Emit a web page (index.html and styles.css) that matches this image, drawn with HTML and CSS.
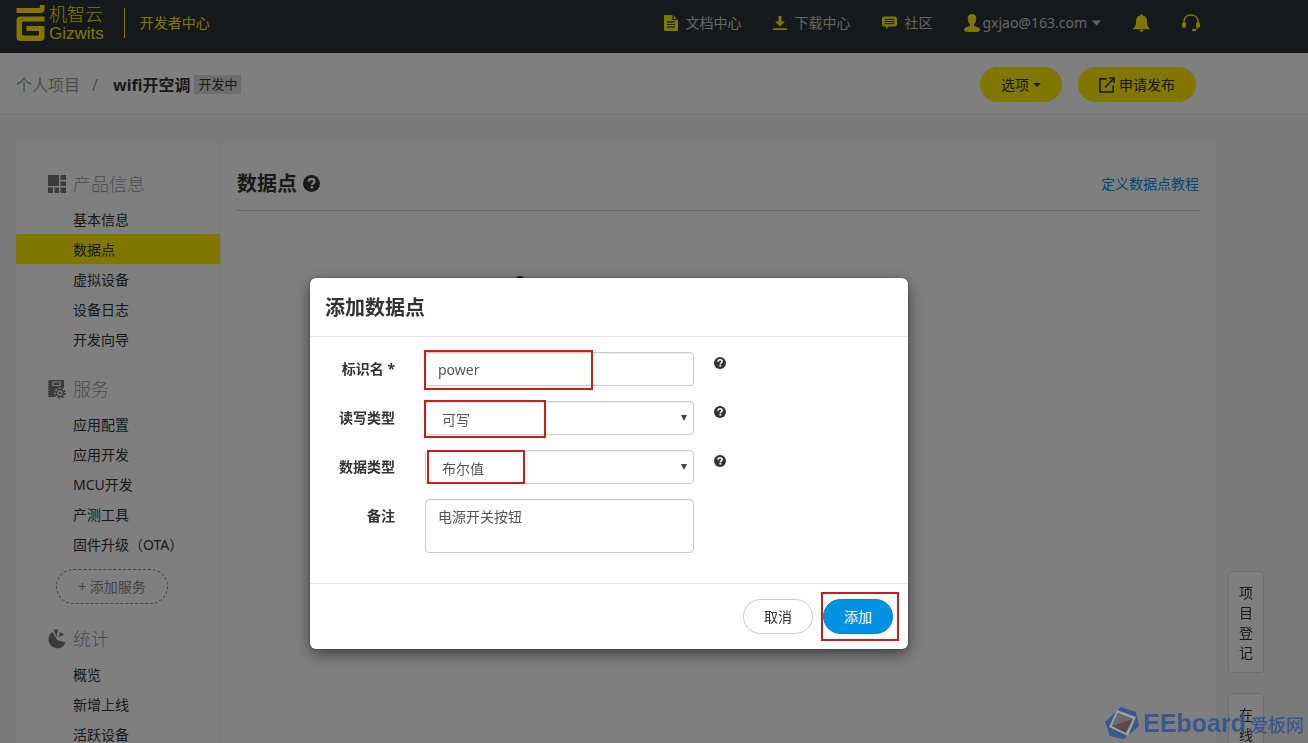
FILE: index.html
```html
<!DOCTYPE html>
<html lang="zh-CN">
<head>
<meta charset="utf-8">
<title>数据点 - 机智云开发者中心</title>
<link rel="stylesheet" href="styles.css">
</head>
<body>
<svg class="sprite" width="0" height="0" aria-hidden="true">
  <symbol id="help" viewBox="0 0 16 16">
    <circle cx="8" cy="8" r="8" fill="#333"/>
    <path d="M5.400 6.300C5.400 4.500 6.500 3.600 8.100 3.600c1.600 0 2.700.9 2.700 2.300 0 1.900-2.300 1.900-2.300 3.600" fill="none" stroke="#fff" stroke-width="2.200"/>
    <rect x="7.200" y="10.600" width="2.400" height="2.200" fill="#fff"/>
  </symbol>
</svg>

<header class="topbar">
  <div class="container topbar-inner">
    <a class="brand" href="#">
      <svg class="brand-mark" viewBox="0 0 28 36" aria-hidden="true">
        <path d="M0 3h22q1.500 0 1.500-1.500V0H28v4q0 4-4 4H0z" fill="#ffee00"/>
        <path d="M4 11.500h24v5H7q-1.500 0-1.500 1.500v11q0 1.500 1.500 1.500h14q1.500 0 1.500-1.500v-3H10v-5h18V32q0 4-4 4H4q-4 0-4-4V15.500q0-4 4-4z" fill="#ffee00"/>
      </svg>
      <span class="brand-text"><span class="brand-cn">机智云</span><span class="brand-en">Gizwits</span></span>
    </a>
    <span class="brand-sub">开发者中心</span>
    <nav class="topnav">
      <a href="#"><svg width="14" height="16" viewBox="0 0 14 16"><path d="M1 0h8l5 5v10q0 1-1 1H1q-1 0-1-1V1q0-1 1-1z" fill="#ffee00"/><path d="M9 0v4.500h4.500M3 6.800h8M3 9.500h8M3 12.200h8" stroke="#2c3238" stroke-width="1.200" fill="none"/></svg>文档中心</a>
      <a href="#"><svg width="14" height="16" viewBox="0 0 14 16"><path d="M5.500 1h3v5.500H12L7 11.500 2 6.500h3.500zM0 13.200h14v1.800H0z" fill="#ffee00"/></svg>下载中心</a>
      <a href="#"><svg width="15" height="16" viewBox="0 0 15 16"><path d="M2 1.500h11q2 0 2 2v6q0 2-2 2H6.500L4 14.500v-3H2q-2 0-2-2v-6q0-2 2-2z" fill="#ffee00"/><path d="M2.500 4.300h10M2.500 6.500h10M2.500 8.700h10" stroke="#2c3238" stroke-width="1"/></svg>社区</a>
      <a class="account" href="#"><svg width="16" height="18" viewBox="0 0 16 18"><path d="M8 0c2.800 0 4.300 1.800 4.300 4.500 0 2.500-1 4.500-2.300 5.700v1.300c1 1.200 6 1.500 6 4 0 1.500-1 2-2.500 2.200-3 .4-8 .4-11 0C1 17.500 0 17 0 15.500c0-2.500 5-2.800 6-4v-1.300C4.700 9 3.700 7 3.700 4.500 3.700 1.800 5.200 0 8 0z" fill="#ffee00"/></svg>gxjao@163.com<svg class="caret-light" width="9" height="6" viewBox="0 0 9 6"><path d="M0 .500h9L4.500 5.500z" fill="#ccc"/></svg></a>
      <a href="#" aria-label="通知"><svg width="17" height="18" viewBox="0 0 17 18"><path d="M8.500 0q1 0 1 1.200C12.500 1.800 14 4 14 6.800c0 4.500.6 6.200 3 7.800v.6H0v-.6c2.400-1.600 3-3.300 3-7.800 0-2.800 1.500-5 4.500-5.600Q7.500 0 8.500 0zM6.500 15.800h4q0 2-2 2t-2-2z" fill="#ffee00"/></svg></a>
      <a href="#" aria-label="客服"><svg width="18" height="18" viewBox="0 0 18 18"><path d="M2 9V7.500C2 3.500 5 1 9 1s7 2.500 7 6.500V9" fill="none" stroke="#ffee00" stroke-width="1.500"/><rect x="0" y="8" width="4" height="6" rx="2" fill="#ffee00"/><rect x="14" y="8" width="4" height="6" rx="2" fill="#ffee00"/><path d="M16 13q-.5 2.300-3 3" fill="none" stroke="#ffee00" stroke-width="1"/><rect x="10" y="14.800" width="4" height="2.400" rx="1.200" fill="#ffee00"/></svg></a>
    </nav>
  </div>
</header>

<section class="project-bar">
  <div class="container project-inner">
    <a class="crumb" href="#">个人项目</a>
    <span class="slash">/</span>
    <strong class="project-name">wifi开空调</strong>
    <span class="badge">开发中</span>
    <div class="project-actions">
      <button class="btn btn-yellow" type="button">选项<svg width="8" height="4" viewBox="0 0 8 4"><path d="M0 0h8L4 4z" fill="#333"/></svg></button>
      <button class="btn btn-yellow" type="button"><svg width="16" height="16" viewBox="0 0 17 17"><path d="M8 2H1v14h14V9M10.500 1H16v5.500M16 1L6.500 11" fill="none" stroke="#333" stroke-width="1.700"/></svg>申请发布</button>
    </div>
  </div>
</section>

<main class="container page">
  <aside class="sidebar">
    <section class="group">
      <h3><svg width="18" height="18" viewBox="0 0 18 18"><path d="M0 0h11v11H0zM12.500 0H18v5h-5.500zM12.500 6.500H18V11h-5.500zM0 12.500h5V18H0zM6.500 12.500H11V18H6.500zM12.500 12.500H18V18h-5.500z" fill="#777"/></svg>产品信息</h3>
      <a href="#">基本信息</a>
      <a class="active" href="#">数据点</a>
      <a href="#">虚拟设备</a>
      <a href="#">设备日志</a>
      <a href="#">开发向导</a>
    </section>
    <section class="group">
      <h3><svg width="18" height="20" viewBox="0 0 18 20"><path d="M1 1h15v8H9v9H1z" fill="#777"/><path d="M.800 2v16" stroke="#777" stroke-width="1.600" stroke-dasharray="1.500 1"/><path d="M5 3h7v3.500H5z" fill="none" stroke="#fff" stroke-width="1.200"/><circle cx="12" cy="14" r="5.800" fill="#fff"/><circle cx="12" cy="14" r="3.500" fill="none" stroke="#777" stroke-width="1.600"/><circle cx="12" cy="14" r="4.900" fill="none" stroke="#777" stroke-width="1.600" stroke-dasharray="2 1.850"/><circle cx="12" cy="14" r="1.300" fill="#777"/></svg>服务</h3>
      <a href="#">应用配置</a>
      <a href="#">应用开发</a>
      <a href="#">MCU开发</a>
      <a href="#">产测工具</a>
      <a href="#">固件升级（OTA）</a>
      <button class="add-service" type="button">+ 添加服务</button>
    </section>
    <section class="group">
      <h3><svg width="18" height="20" viewBox="0 0 18 20"><path d="M4.500 3L9 11l8.500 2.500A8.800 8.800 0 1 1 4.500 3z" fill="#777"/><path d="M5.500.500h4.500L8.500 8zM10.200 8.500L12.500 3l3.500 2.500z" fill="#777"/></svg>统计</h3>
      <a href="#">概览</a>
      <a href="#">新增上线</a>
      <a href="#">活跃设备</a>
    </section>
  </aside>
  <section class="content">
    <div class="content-head">
      <h2>数据点</h2>
      <svg width="17" height="17"><use href="#help"/></svg>
      <a href="#">定义数据点教程</a>
    </div>
    <div class="empty-mark"></div>
  </section>
</main>

<aside class="side-tabs">
  <button type="button">项目登记</button>
  <button type="button">在线</button>
</aside>

<div class="overlay">
  <form class="modal" role="dialog" aria-labelledby="dlg-title">
    <h2 class="modal-head" id="dlg-title">添加数据点</h2>
    <div class="modal-body">
      <label for="f-name">标识名 *</label>
      <div class="field"><input id="f-name" type="text" value="power"><span class="mark mark-name"></span></div>
      <svg class="hint" width="12" height="12"><use href="#help"/></svg>

      <label for="f-rw">读写类型</label>
      <div class="field"><select id="f-rw"><option>可写</option></select><svg class="arrow" width="6" height="6" viewBox="0 0 6 6"><path d="M0 0h6L3 6z" fill="#444"/></svg><span class="mark mark-rw"></span></div>
      <svg class="hint" width="12" height="12"><use href="#help"/></svg>

      <label for="f-type">数据类型</label>
      <div class="field"><select id="f-type"><option>布尔值</option></select><svg class="arrow" width="6" height="6" viewBox="0 0 6 6"><path d="M0 0h6L3 6z" fill="#444"/></svg><span class="mark mark-type"></span></div>
      <svg class="hint" width="12" height="12"><use href="#help"/></svg>

      <label for="f-note">备注</label>
      <div class="field"><textarea id="f-note">电源开关按钮</textarea></div>
    </div>
    <div class="modal-foot">
      <button class="btn btn-plain" type="button">取消</button>
      <div class="submit-wrap"><button class="btn btn-blue" type="button">添加</button><span class="mark mark-submit"></span></div>
    </div>
  </form>
</div>

<div class="watermark">
  <svg width="34" height="32" viewBox="0 0 34 32"><path d="M16 0L31 5l3 14-15 13L5 29 0 15z" fill="#2c5291"/><path d="M12 3l19 7-8 19-19-9z" fill="#a3a6ab"/><path d="M13 6l15 6-7 14-14-7z" fill="#55403f"/><path d="M13 6l15 6-21 7z" fill="#686868"/></svg>
  <span class="wm-en">EEboard</span><span class="wm-cn">爱板网</span>
</div>
</body>
</html>
```
FILE: styles.css
```css
* { box-sizing: border-box; }

body {
  margin: 0;
  height: 100vh;
  overflow: hidden;
  background: #f5f5f5;
  color: #333;
  font: 14px/20px "Noto Sans", "Noto Sans CJK SC", sans-serif;
}

a { color: inherit; text-decoration: none; }
h2, h3 { margin: 0; }
svg { flex: none; }
button, input, select, textarea { font: inherit; color: inherit; margin: 0; }
.sprite { position: absolute; }
.container { max-width: 1200px; margin: 0 92px 0 16px; }

.topbar { background: #2c3238; color: #ccc; }
.topbar-inner { display: flex; align-items: center; height: 53px; padding: 0 16px 8px 0; }
.brand { display: flex; align-items: center; gap: 4px; color: #ffee00; }
.brand-mark { width: 29px; height: 36px; }
.brand-text { display: flex; flex-direction: column; }
.brand-cn { font-size: 18px; line-height: 22px; font-weight: 300; }
.brand-en { font: 17px/18px "Liberation Sans", sans-serif; }
.brand-sub { margin-left: 20px; padding: 5px 0 5px 15px; border-left: 1px solid #ffee00; color: #ffee00; }
.topnav { display: flex; align-items: center; margin-left: auto; gap: 32px; }
.topnav a { display: flex; align-items: center; gap: 7px; }
.topnav .account { gap: 2px; }
.caret-light { margin-left: 3px; }

.project-bar { background: #fff; border-bottom: 1px solid #eee; }
.project-inner { display: flex; align-items: center; height: 60px; padding-right: 20px; padding-top: 3px; }
.crumb { color: #999; font-size: 16px; }
.slash { color: #999; font-size: 16px; margin: 0 15px 0 12px; }
.project-name { font-size: 16px; }
.badge { margin-left: 4px; padding: 0 4px; background: #ddd; font-size: 13px; line-height: 19px; }
.project-actions { display: flex; gap: 16px; margin-left: auto; }

.btn { display: flex; align-items: center; justify-content: center; height: 35px; padding: 0 20px; border: 1px solid transparent; border-radius: 18px; }
.btn-yellow { gap: 4px; background: #ffee00; }
.btn-plain { background: #fff; border-color: #ccc; }
.btn-blue { background: #0092e2; color: #fff; border-color: #0086d0; }

.page { display: flex; height: calc(100vh - 143px); overflow: hidden; margin-top: 29px; background: #fff; }
.sidebar { width: 205px; padding-top: 21px; border-right: 1px solid #f0f0f0; }
.group { display: flex; flex-direction: column; margin-bottom: 15px; }
.group h3 { display: flex; align-items: center; gap: 7px; height: 40px; padding-left: 32px; color: #999; font-size: 18px; font-weight: 300; }
.group a { height: 30px; padding: 1px 0 0 57px; line-height: 30px; }
.group .active { background: #ffee00; }
.add-service { align-self: flex-start; width: 112px; height: 35px; margin: 10px 0 0 40px; padding: 0; border: 1px dashed #888; border-radius: 18px; background: none; color: #888; }

.content { flex: 1; padding: 0 17px 0 16px; }
.content-head { display: flex; align-items: center; gap: 6px; height: 68px; padding-top: 14px; border-bottom: 1px solid #ccc; }
.content-head h2 { font-size: 20px; line-height: 28px; }
.content-head a { margin-left: auto; color: #0092e2; }
.empty-mark { width: 8px; height: 8px; margin: 65px 0 0 279px; border-radius: 50%; background: #333; }

.side-tabs { position: fixed; top: 571px; right: 44px; display: flex; flex-direction: column; gap: 20px; }
.side-tabs button { width: 36px; padding: 11px 10px 9px; border: 1px solid #ddd; border-radius: 4px; background: #fff; line-height: 20px; word-break: break-all; }

.overlay { position: fixed; inset: 0; display: flex; justify-content: center; align-items: flex-start; padding: 278px 90px 0 0; background: rgba(0, 0, 0, .5); }
.modal { width: 598px; background: #fff; border-radius: 6px; box-shadow: 0 5px 15px rgba(0, 0, 0, .5), 0 0 2px rgba(0, 0, 0, .5); }
.modal-head { padding: 16px 15px 14px; border-bottom: 1px solid #e5e5e5; font-size: 20px; line-height: 28px; }
.modal-body { display: grid; grid-template-columns: 70px 269px 12px; column-gap: 30px; row-gap: 15px; padding: 15px 15px 30px; }
.modal-body label { padding-top: 7px; text-align: right; font-weight: 700; }
.field { position: relative; display: flex; }
.field input, .field select, .field textarea { width: 100%; height: 34px; padding: 0 12px; border: 1px solid #ccc; border-radius: 4px; background: #fff; color: #555; box-shadow: inset 0 1px 1px rgba(0, 0, 0, .075); }
.field select { appearance: none; padding-top: 3px; padding-left: 16px; }
.field textarea { height: 54px; padding-top: 7px; resize: none; }
.arrow { position: absolute; right: 7px; top: 14px; }
.hint { margin: 5px 0 0 -10px; }
.modal-foot { display: flex; justify-content: flex-end; gap: 10px; padding: 15px; border-top: 1px solid #e5e5e5; }
.modal-foot .btn { width: 70px; padding: 0; }
.submit-wrap { position: relative; }

.mark { position: absolute; border: 2px solid #c81e1e; pointer-events: none; }
.mark-name { left: -1px; top: -2px; width: 169px; height: 40px; }
.mark-rw { left: -1px; top: -1px; width: 122px; height: 38px; }
.mark-type { left: 2px; top: 0; width: 98px; height: 34px; }
.mark-submit { left: -2px; top: -7px; width: 78px; height: 49px; }

.watermark { position: fixed; right: 4px; bottom: 4px; display: flex; align-items: center; gap: 4px; color: #2f528c; opacity: .85; }
.wm-en { font: 700 25px/32px "Liberation Sans", sans-serif; }
.wm-cn { padding-top: 4px; font-size: 18px; line-height: 28px; font-weight: 500; }
```
